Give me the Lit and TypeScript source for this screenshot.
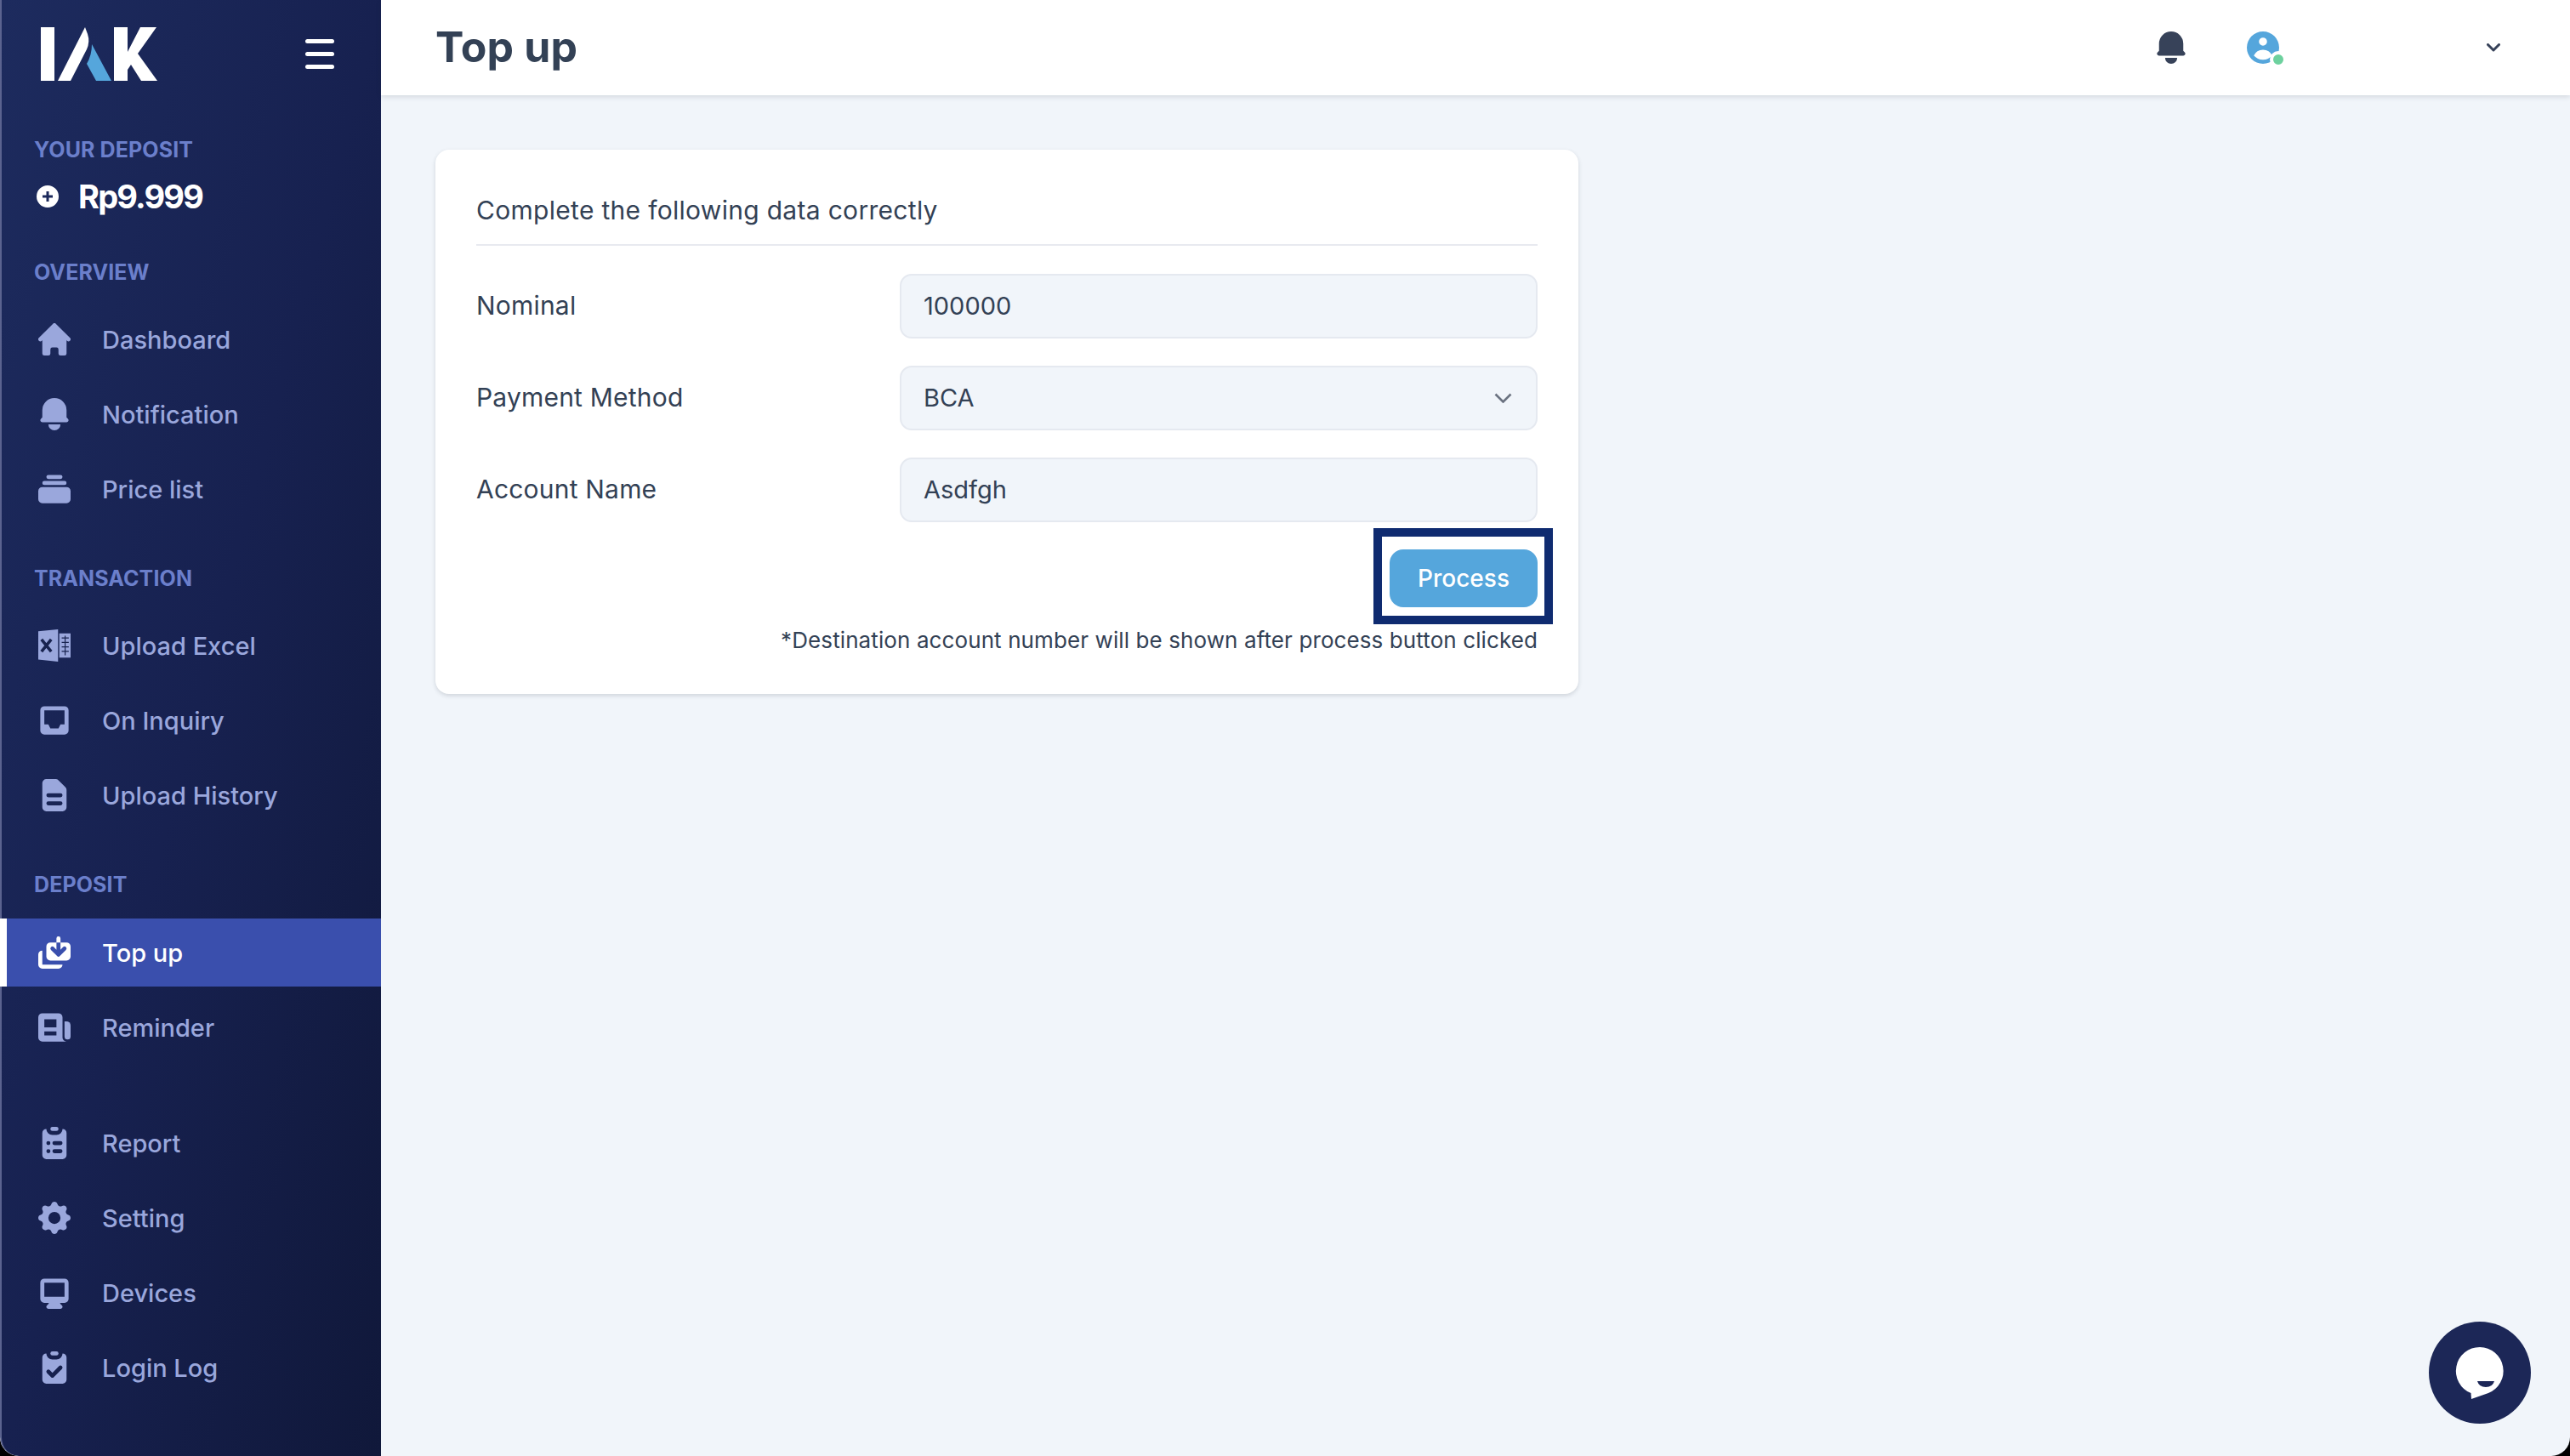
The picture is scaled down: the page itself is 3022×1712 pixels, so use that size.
import { LitElement, html, css, svg } from "lit";
import { customElement } from "lit/decorators.js";

const ICONS: Record<string, unknown> = {
  home: svg`<path d="M10.707 2.293a1 1 0 00-1.414 0l-7 7a1 1 0 001.414 1.414L4 10.414V17a1 1 0 001 1h2a1 1 0 001-1v-2a1 1 0 011-1h2a1 1 0 011 1v2a1 1 0 001 1h2a1 1 0 001-1v-6.586l.293.293a1 1 0 001.414-1.414l-7-7z"/>`,
  bell: svg`<path d="M10 2a6 6 0 00-6 6v3.586l-.707.707A1 1 0 004 14h12a1 1 0 00.707-1.707L16 11.586V8a6 6 0 00-6-6zM10 18a3 3 0 01-3-3h6a3 3 0 01-3 3z"/>`,
  collection: svg`<path d="M7 3a1 1 0 000 2h6a1 1 0 100-2H7zM4 7a1 1 0 011-1h10a1 1 0 110 2H5a1 1 0 01-1-1zM2 11a2 2 0 012-2h12a2 2 0 012 2v4a2 2 0 01-2 2H4a2 2 0 01-2-2v-4z"/>`,
  inbox: svg`<path fill-rule="evenodd" d="M5 3a2 2 0 00-2 2v10a2 2 0 002 2h10a2 2 0 002-2V5a2 2 0 00-2-2H5zm0 2h10v7h-2l-1 2H8l-1-2H5V5z"/>`,
  doc: svg`<path fill-rule="evenodd" d="M4 4a2 2 0 012-2h4.586A2 2 0 0112 2.586L15.414 6A2 2 0 0116 7.414V16a2 2 0 01-2 2H6a2 2 0 01-2-2V4zm2 6a1 1 0 011-1h6a1 1 0 110 2H7a1 1 0 01-1-1zm1 3a1 1 0 100 2h6a1 1 0 100-2H7z"/>`,
  saveas: svg`<path d="M9.707 7.293a1 1 0 00-1.414 1.414l3 3a1 1 0 001.414 0l3-3a1 1 0 00-1.414-1.414L13 8.586V5h3a2 2 0 012 2v5a2 2 0 01-2 2H8a2 2 0 01-2-2V7a2 2 0 012-2h3v3.586L9.707 7.293zM11 3a1 1 0 112 0v2h-2V3z"/><path d="M4 9a2 2 0 00-2 2v5a2 2 0 002 2h8a2 2 0 002-2H4V9z"/>`,
  news: svg`<path fill-rule="evenodd" d="M2 5a2 2 0 012-2h8a2 2 0 012 2v10a2 2 0 002 2H4a2 2 0 01-2-2V5zm3 1h6v4H5V6zm6 6H5v2h6v-2z"/><path d="M15 7h1a2 2 0 012 2v5.5a1.5 1.5 0 01-3 0V7z"/>`,
  report: svg`<path d="M9 2a1 1 0 000 2h2a1 1 0 100-2H9z"/><path fill-rule="evenodd" d="M4 5a2 2 0 012-2 3 3 0 003 3h2a3 3 0 003-3 2 2 0 012 2v11a2 2 0 01-2 2H6a2 2 0 01-2-2V5zm3 4a1 1 0 000 2h.01a1 1 0 100-2H7zm3 0a1 1 0 000 2h3a1 1 0 100-2h-3zm-3 4a1 1 0 100 2h.01a1 1 0 100-2H7zm3 0a1 1 0 100 2h3a1 1 0 100-2h-3z"/>`,
  cog: svg`<path fill-rule="evenodd" d="M11.49 3.17c-.38-1.56-2.6-1.56-2.98 0a1.532 1.532 0 01-2.286.948c-1.372-.836-2.942.734-2.106 2.106.54.886.061 2.042-.947 2.287-1.561.379-1.561 2.6 0 2.978a1.532 1.532 0 01.947 2.287c-.836 1.372.734 2.942 2.106 2.106a1.532 1.532 0 012.287.947c.379 1.561 2.6 1.561 2.978 0a1.533 1.533 0 012.287-.947c1.372.836 2.942-.734 2.106-2.106a1.533 1.533 0 01.947-2.287c1.561-.379 1.561-2.6 0-2.978a1.532 1.532 0 01-.947-2.287c.836-1.372-.734-2.942-2.106-2.106a1.532 1.532 0 01-2.287-.947zM10 13a3 3 0 100-6 3 3 0 000 6z"/>`,
  desktop: svg`<path fill-rule="evenodd" d="M3 5a2 2 0 012-2h10a2 2 0 012 2v8a2 2 0 01-2 2h-2.22l.123.489.804.804A1 1 0 0113 18H7a1 1 0 01-.707-1.707l.804-.804L7.22 15H5a2 2 0 01-2-2V5zm5.771 7H5V5h10v7H8.771z"/>`,
  check: svg`<path d="M9 2a1 1 0 000 2h2a1 1 0 100-2H9z"/><path fill-rule="evenodd" d="M4 5a2 2 0 012-2 3 3 0 003 3h2a3 3 0 003-3 2 2 0 012 2v11a2 2 0 01-2 2H6a2 2 0 01-2-2V5zm9.707 5.707a1 1 0 00-1.414-1.414L9 12.586l-1.293-1.293a1 1 0 00-1.414 1.414l2 2a1 1 0 001.414 0l4-4z"/>`,
  excel: svg`<path d="M2 2.900 11.800 2v16L2 16.900z"/><path d="M12.400 4H18v12h-5.600z"/><g stroke="#18234f" stroke-width=".5" fill="none"><path d="M13.600 6.300h3.500M13.600 8.500h3.500M13.600 10.700h3.500M13.600 12.900h3.500M15.300 5.200v9.600"/></g><path d="M3.600 7 8.400 13M8.400 7 3.600 13" stroke="#18234f" stroke-width="1.500" fill="none"/>`,
};

const ic = (name: string) => html`<svg class="ic" viewBox="2 2 16 16" fill="currentColor">${ICONS[name]}</svg>`;

interface Item { icon: string; label: string; active?: boolean }
interface Group { title?: string; cls: string; items: Item[] }

const GROUPS: Group[] = [
  { title: "OVERVIEW", cls: "g-a", items: [
    { icon: "home", label: "Dashboard" },
    { icon: "bell", label: "Notification" },
    { icon: "collection", label: "Price list" },
  ]},
  { title: "TRANSACTION", cls: "g-a", items: [
    { icon: "excel", label: "Upload Excel" },
    { icon: "inbox", label: "On Inquiry" },
    { icon: "doc", label: "Upload History" },
  ]},
  { title: "DEPOSIT", cls: "g-a", items: [
    { icon: "saveas", label: "Top up", active: true },
    { icon: "news", label: "Reminder" },
  ]},
  { cls: "g-b", items: [
    { icon: "report", label: "Report" },
    { icon: "cog", label: "Setting" },
    { icon: "desktop", label: "Devices" },
    { icon: "check", label: "Login Log" },
  ]},
];

@customElement("app-root")
export class AppRoot extends LitElement {
  static styles = css`
    :host { display: block; width: 3022px; height: 1712px; background: #000; font-family: Inter, "Open Sans", sans-serif; color: #334155; }
    * { box-sizing: border-box; }
    .window { width: 3022px; height: 1712px; display: flex; border-radius: 0 0 22px 22px; overflow: hidden; background: #f1f5fa; position: relative; }

    .side { width: 448px; flex: none; border-left: 2px solid #5b638f; border-bottom-left-radius: 22px; background: linear-gradient(to bottom right, #1d2b5e 0%, #172150 50%, #10183a 100%); padding-top: 32px; }
    .top { display: flex; align-items: center; justify-content: space-between; height: 63px; padding: 0 55px 0 46px; }
    .logo { width: 137px; height: 63px; display: block; }
    .burger { width: 34px; display: flex; flex-direction: column; gap: 10px; }
    .burger i { display: block; height: 5px; border-radius: 3px; background: #fff; }
    .label { font-size: 25px; font-weight: 700; line-height: 32px; color: #6b7fcb; padding-left: 38px; letter-spacing: 0.1px; }
    .dep { margin-top: 65px; }
    .amount { margin-top: 15px; height: 48px; display: flex; align-items: center; padding-left: 41px; gap: 23px; color: #fff; font-size: 38px; font-weight: 700; letter-spacing: -1.8px; }
    .plus { width: 26px; height: 26px; display: block; }
    .g-a { margin-top: 49px; }
    .g-b { margin-top: 56px; }
    .items { display: flex; flex-direction: column; gap: 8px; margin-top: 23px; }
    .g-b .items { margin-top: 0; }
    .item { height: 80px; display: flex; align-items: center; padding-left: 43px; gap: 37px; color: #9aa7dc; font-size: 29px; font-weight: 500; }
    .item.active { background: #3a4fad; border-left: 8px solid #fff; margin-left: -2px; padding-left: 37px; color: #fff; }
    .items.first-active { margin-top: 24px; }
    .ic { width: 38px; height: 38px; flex: none; display: block; }

    .main { flex: 1; min-width: 0; display: flex; flex-direction: column; }
    .head { height: 112px; background: #fff; box-shadow: 0 2px 6px rgba(30, 41, 59, 0.14); display: flex; align-items: center; padding: 0 82px 0 64px; flex: none; }
    .title { font-size: 50px; font-weight: 700; letter-spacing: 0.2px; color: #334155; flex: 1; padding-bottom: 2px; }
    .h-bell { color: #374259; width: 38px; height: 38px; display: block; margin-right: 70px; }
    .avatar { position: relative; width: 38px; height: 38px; margin-right: 244px; color: #55a6dc; }
    .avatar svg { width: 38px; height: 38px; display: block; }
    .dot { position: absolute; left: 27px; top: 23px; width: 20px; height: 20px; border-radius: 50%; background: #6dd19e; border: 4px solid #fff; }
    .caret { width: 16px; height: 10px; display: block; }

    .body { padding: 64px 0 0 64px; }
    .card { width: 1344px; height: 640px; background: #fff; border-radius: 16px; box-shadow: 0 2px 5px rgba(30, 41, 59, 0.16); padding: 48px 48px 0; }
    .card-title { font-size: 30px; line-height: 47px; font-weight: 400; letter-spacing: 0.3px; height: 65px; border-bottom: 2px solid #e8eaf0; }
    .rows { margin-top: 33px; display: flex; flex-direction: column; gap: 32px; }
    .row { display: flex; align-items: center; height: 76px; font-size: 30px; font-weight: 400; letter-spacing: 0.2px; }
    .row .name { width: 498px; padding-bottom: 2px; }
    .field { width: 750px; height: 76px; background: #f1f5fa; border: 2px solid #e5e9f0; border-radius: 14px; display: flex; align-items: center; justify-content: space-between; padding: 0 28px 2px 26px; font-size: 29px; font-weight: 400; letter-spacing: 0; }
    .sel { width: 21px; height: 12px; display: block; margin-top: 2px; }
    .actions { display: flex; justify-content: flex-end; margin-top: 32px; }
    .btn { position: relative; width: 174px; height: 68px; background: #55a6dc; color: #fff; border-radius: 16px; display: flex; align-items: center; justify-content: center; font-size: 28px; font-weight: 500; }
    .mark { position: absolute; left: -19px; right: -18px; top: -25px; bottom: -20px; border: 10px solid #0f2b70; pointer-events: none; }
    .note { text-align: right; margin-top: 23px; font-size: 26px; line-height: 32px; font-weight: 400; letter-spacing: 0.1px; }

    .chat { position: absolute; left: 2856px; top: 1554px; width: 120px; height: 120px; border-radius: 50%; background: #1c2757; display: flex; align-items: center; justify-content: center; }
    .chat svg { width: 120px; height: 120px; display: block; }
  `;

  private group(g: Group) {
    const first = g.items[0].active ? "first-active" : "";
    return html`<section class=${g.cls}>
      ${g.title ? html`<div class="label">${g.title}</div>` : ""}
      <div class="items ${first}">
        ${g.items.map(i => html`<div class="item ${i.active ? "active" : ""}">${ic(i.icon)}<span>${i.label}</span></div>`)}
      </div>
    </section>`;
  }

  render() {
    return html`<div class="window">
      <aside class="side">
        <div class="top">
          <svg class="logo" viewBox="48 32 137 63">
            <path fill="#fff" d="M48 32h16v63H48zM68 95 100 32l3 8q3 9-1 18L83 95zM134 32h16v29L165 32h19l-22 31 23 32h-19l-12-19-4 6v13h-16z"/>
            <path fill="#55a6dc" d="M108 52 131 95H113L102 75q6-10 6-23z"/>
          </svg>
          <div class="burger"><i></i><i></i><i></i></div>
        </div>
        <div class="label dep">YOUR DEPOSIT</div>
        <div class="amount">
          <svg class="plus" viewBox="0 0 26 26"><path fill="#fff" fill-rule="evenodd" d="M13 0a13 13 0 110 26 13 13 0 010-26zM11.500 7v4.500H7v3h4.500V19h3v-4.500H19v-3h-4.500V7z"/></svg>
          <span>Rp9.999</span>
        </div>
        ${GROUPS.map(g => this.group(g))}
      </aside>
      <main class="main">
        <header class="head">
          <div class="title">Top up</div>
          <svg class="h-bell" viewBox="2 2 16 16" fill="currentColor">${ICONS.bell}</svg>
          <div class="avatar">
            <svg viewBox="2 2 16 16" fill="currentColor"><path fill-rule="evenodd" d="M18 10a8 8 0 11-16 0 8 8 0 0116 0zm-6-3a2 2 0 11-4 0 2 2 0 014 0zm-2 4a5 5 0 00-4.546 2.916A5.986 5.986 0 0010 16a5.986 5.986 0 004.546-2.084A5 5 0 0010 11z"/></svg>
            <span class="dot"></span>
          </div>
          <svg class="caret" viewBox="0 0 16 10"><path d="M1.500 1.500 8 8l6.500-6.500" fill="none" stroke="#374259" stroke-width="3" stroke-linecap="round" stroke-linejoin="round"/></svg>
        </header>
        <div class="body">
          <div class="card">
            <div class="card-title">Complete the following data correctly</div>
            <div class="rows">
              <div class="row"><div class="name">Nominal</div><div class="field">100000</div></div>
              <div class="row"><div class="name">Payment Method</div><div class="field"><span>BCA</span>
                <svg class="sel" viewBox="0 0 21 12"><path d="M1.500 1.500 10.500 10.500 19.500 1.500" fill="none" stroke="#6b7280" stroke-width="2.600"/></svg></div></div>
              <div class="row"><div class="name">Account Name</div><div class="field">Asdfgh</div></div>
            </div>
            <div class="actions"><div class="btn">Process<span class="mark"></span></div></div>
            <div class="note">*Destination account number will be shown after process button clicked</div>
          </div>
        </div>
      </main>
      <div class="chat">
        <svg viewBox="0 0 120 120"><path fill="#fff" fill-rule="evenodd" d="M60 30a28 28 0 0 1 10 54L50 91l-.5-7A28 28 0 0 1 60 30zM57 70q2 7 10 7t10-7z"/></svg>
      </div>
    </div>`;
  }
}
